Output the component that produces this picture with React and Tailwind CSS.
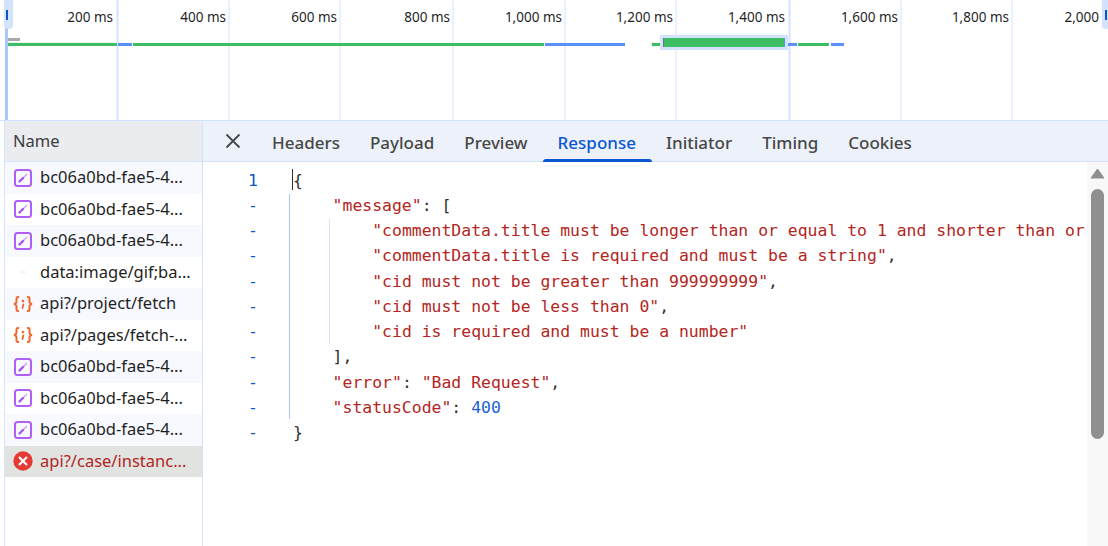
import React from "react";

const ticks = ["200 ms", "400 ms", "600 ms", "800 ms", "1,000 ms", "1,200 ms", "1,400 ms", "1,600 ms", "1,800 ms", "2,000"];
const tickRight = [113, 226, 337, 450, 562, 673, 785, 898, 1009, 1099];
const gridLines = [117, 229, 340, 453, 565, 676, 789, 901, 1012];
const tabs = ["Headers", "Payload", "Preview", "Response", "Initiator", "Timing", "Cookies"];

const requests = [
  { type: "img", name: "bc06a0bd-fae5-4..." },
  { type: "img", name: "bc06a0bd-fae5-4..." },
  { type: "img", name: "bc06a0bd-fae5-4..." },
  { type: "gif", name: "data:image/gif;ba..." },
  { type: "json", name: "api?/project/fetch" },
  { type: "json", name: "api?/pages/fetch-..." },
  { type: "img", name: "bc06a0bd-fae5-4..." },
  { type: "img", name: "bc06a0bd-fae5-4..." },
  { type: "img", name: "bc06a0bd-fae5-4..." },
  { type: "err", name: "api?/case/instanc..." },
];

const S = ({ children }) => <span className="text-[#b3261e]">{children}</span>;

const lines = [
  { no: "1", indent: 0, body: "{" },
  { indent: 1, body: <><S>"message"</S>: [</> },
  { indent: 2, body: <S>"commentData.title must be longer than or equal to 1 and shorter than or</S> },
  { indent: 2, body: <><S>"commentData.title is required and must be a string"</S>,</> },
  { indent: 2, body: <><S>"cid must not be greater than 999999999"</S>,</> },
  { indent: 2, body: <><S>"cid must not be less than 0"</S>,</> },
  { indent: 2, body: <S>"cid is required and must be a number"</S> },
  { indent: 1, body: "]," },
  { indent: 1, body: <><S>"error"</S>: <S>"Bad Request"</S>,</> },
  { indent: 1, body: <><S>"statusCode"</S>: <span className="text-[#1a62d6]">400</span></> },
  { indent: 0, body: "}" },
];

function ImgIcon() {
  return (
    <svg width="18" height="18" viewBox="0 0 18 18" fill="none" className="shrink-0">
      <rect x="1" y="1" width="16" height="16" rx="2.5" stroke="#b05ff5" strokeWidth="2" />
      <path d="M9 9 L13 5" stroke="#cf9dfa" strokeWidth="1.2" />
      <path d="M5.5 12.5 L9 9" stroke="#a855f7" strokeWidth="2.4" strokeLinecap="round" />
    </svg>
  );
}

function JsonIcon() {
  return (
    <svg width="20" height="18" viewBox="0 0 20 18" fill="none" stroke="#f2682a" strokeWidth="2" className="shrink-0">
      <path d="M6 2 H5 Q3.5 2 3.5 3.5 V6.5 Q3.5 8.5 1 9 Q3.5 9.5 3.5 11.5 V14.5 Q3.5 16 5 16 H6" />
      <path d="M14 2 H15 Q16.5 2 16.5 3.5 V6.5 Q16.5 8.5 19 9 Q16.5 9.5 16.5 11.5 V14.5 Q16.5 16 15 16 H14" />
      <circle cx="10" cy="6" r="1.3" fill="#f2682a" stroke="none" />
      <path d="M10.3 9.5 L9.5 13" strokeLinecap="round" strokeWidth="1.8" />
    </svg>
  );
}

function ErrIcon() {
  return (
    <svg width="20" height="20" viewBox="0 0 20 20" fill="none" className="shrink-0">
      <circle cx="10" cy="10" r="9.7" fill="#e53935" />
      <path d="M6 6 L14 14 M14 6 L6 14" stroke="#fff" strokeWidth="2.2" />
    </svg>
  );
}

function GifIcon() {
  return (
    <svg width="18" height="18" viewBox="0 0 18 18" className="shrink-0">
      <path d="M6 9 H12" stroke="#efe6f2" strokeWidth="1" />
    </svg>
  );
}

const icons = { img: ImgIcon, json: JsonIcon, err: ErrIcon, gif: GifIcon };

function Overview() {
  return (
    <div className="relative h-[121px] border-b border-[#d3e3fd] overflow-hidden">
      <svg width="1108" height="121" className="absolute left-0 top-0">
        {gridLines.map((x) => (
          <rect key={x} x={x - 0.5} y="0" width={x === 117 || x === 789 ? 2 : 1} height="120" fill="#d3e3fd" />
        ))}
        <rect x="5" y="0" width="3" height="120" fill="#a8c7fa" />
        <rect x="8" y="38" width="12" height="3" fill="#a9a9a9" />
        <rect x="8" y="42" width="109" height="4" fill="#e8f5ec" />
        <rect x="8" y="43" width="109" height="3" fill="#3dbd64" />
        <rect x="118" y="43" width="14" height="3" fill="#5b8ff9" />
        <rect x="133" y="43" width="411" height="3" fill="#3dbd64" />
        <rect x="545" y="43" width="80" height="3" fill="#5b8ff9" />
        <rect x="650" y="42" width="10" height="5" fill="#eef5ef" />
        <rect x="652" y="43" width="8" height="3" fill="#3dbd64" />
        <rect x="660" y="35" width="128" height="15" fill="#d3e3fd" />
        <rect x="663" y="38" width="122" height="9" fill="#3dbd64" />
        <rect x="663" y="38" width="1" height="9" fill="#6b7280" />
        <rect x="784" y="38" width="1" height="9" fill="#5b8ff9" />
        <rect x="788" y="43" width="9" height="3" fill="#5b8ff9" />
        <rect x="798" y="43" width="31" height="3" fill="#3dbd64" />
        <rect x="831" y="43" width="13" height="3" fill="#5b8ff9" />
      </svg>
      {ticks.map((t, i) => (
        <span
          key={t}
          className="absolute top-[9px] text-[13.5px] leading-[17px] whitespace-nowrap text-[#1f1f1f]"
          style={{ right: 1108 - tickRight[i] }}
        >
          {t}
        </span>
      ))}
      <div className="absolute left-[4px] top-0 w-[9px] h-[29px] bg-[#d3e3fd] rounded-b-[4px] flex items-center pl-[2px]">
        <div className="w-[2px] h-[10px] bg-[#0b57d0]" />
      </div>
      <div className="absolute left-[1102px] top-0 w-[9px] h-[29px] bg-[#d3e3fd] rounded-b-[4px] flex items-center pl-[3px]">
        <div className="w-[2px] h-[10px] bg-[#0b57d0]" />
      </div>
    </div>
  );
}

function NameColumn() {
  return (
    <div className="w-[199px] shrink-0 ml-[4px] border-l border-r border-[#d3e3fd] flex flex-col">
      <div className="h-[41px] bg-[#eaecef] border-b border-[#d3e3fd] flex items-center pl-[8px] text-[16.5px] text-[#3c3c3c]">
        Name
      </div>
      {requests.map((r, i) => {
        const Icon = icons[r.type];
        const bg = r.type === "err" ? "bg-[#e1e3e1] text-[#b3261e]" : i % 2 === 0 ? "bg-[#f7f9ff] text-[#1f1f1f]" : "bg-white text-[#1f1f1f]";
        return (
          <div key={i} className={`h-[31.5px] flex items-center whitespace-nowrap text-[16.5px] ${bg}`}>
            <div className="w-[35px] flex justify-center shrink-0">
              <Icon />
            </div>
            <span>{r.name}</span>
          </div>
        );
      })}
    </div>
  );
}

function DetailPane() {
  return (
    <div className="flex-1 min-w-0 flex flex-col">
      <div className="h-[41px] shrink-0 bg-[#edf2fa] border-b border-[#d3e3fd] flex items-stretch text-[17px] text-[#474747] font-medium">
        <div className="w-[69px] flex items-center pl-[21px]">
          <svg width="18" height="18" viewBox="0 0 18 18" stroke="#474747" strokeWidth="1.8">
            <path d="M2.5 2.5 L15.5 15.5 M15.5 2.5 L2.5 15.5" />
          </svg>
        </div>
        <div className="flex gap-[30px]">
          {tabs.map((t) =>
            t === "Response" ? (
              <div key={t} className="relative flex items-center pt-[3px] text-[#0b57d0]">
                {t}
                <div className="absolute left-[-15px] right-[-16px] bottom-[-1px] h-[3px] bg-[#0b57d0] rounded-t-[3px]" />
              </div>
            ) : (
              <div key={t} className="flex items-center pt-[3px]">
                {t}
              </div>
            )
          )}
        </div>
      </div>
      <div className="relative flex-1 overflow-hidden pt-[5.5px] font-['DejaVu_Sans_Mono',monospace] text-[16.45px] leading-[25.25px] text-[#303030]">
        {lines.map((l, i) => (
          <div key={i} className="flex whitespace-nowrap">
            <div className="w-[55px] shrink-0 text-right text-[#0b57d0]">{l.no || "-"}</div>
            <div className="pl-[35px]" style={{ marginLeft: l.indent * 39.6 }}>
              {l.body}
            </div>
          </div>
        ))}
        <div className="absolute left-[86px] top-[32px] w-px h-[225px] bg-[#a8c7fa]" />
        <div className="absolute left-[126px] top-[57px] w-px h-[125px] bg-[#d3e3fd]" />
        <div className="absolute left-[89px] top-[7px] w-px h-[21px] bg-[#303030]" />
        <div className="absolute right-0 top-0 bottom-0 w-[21px] bg-[#f8f8f8] flex flex-col items-center">
          <svg width="15" height="11" viewBox="0 0 15 11" className="mt-[6px]">
            <path d="M7.5 1 L14 10 H1 Z" fill="#8f8f8f" stroke="#8f8f8f" strokeWidth="1" strokeLinejoin="round" />
          </svg>
          <div className="mt-[10px] w-[13px] h-[250px] rounded-[7px] bg-[#8f8f8f]" />
        </div>
      </div>
    </div>
  );
}

export default function App() {
  return (
    <div className="w-[1108px] h-[546px] bg-white overflow-hidden flex flex-col font-['Noto_Sans',sans-serif]">
      <Overview />
      <div className="flex flex-1 min-h-0">
        <NameColumn />
        <DetailPane />
      </div>
    </div>
  );
}
